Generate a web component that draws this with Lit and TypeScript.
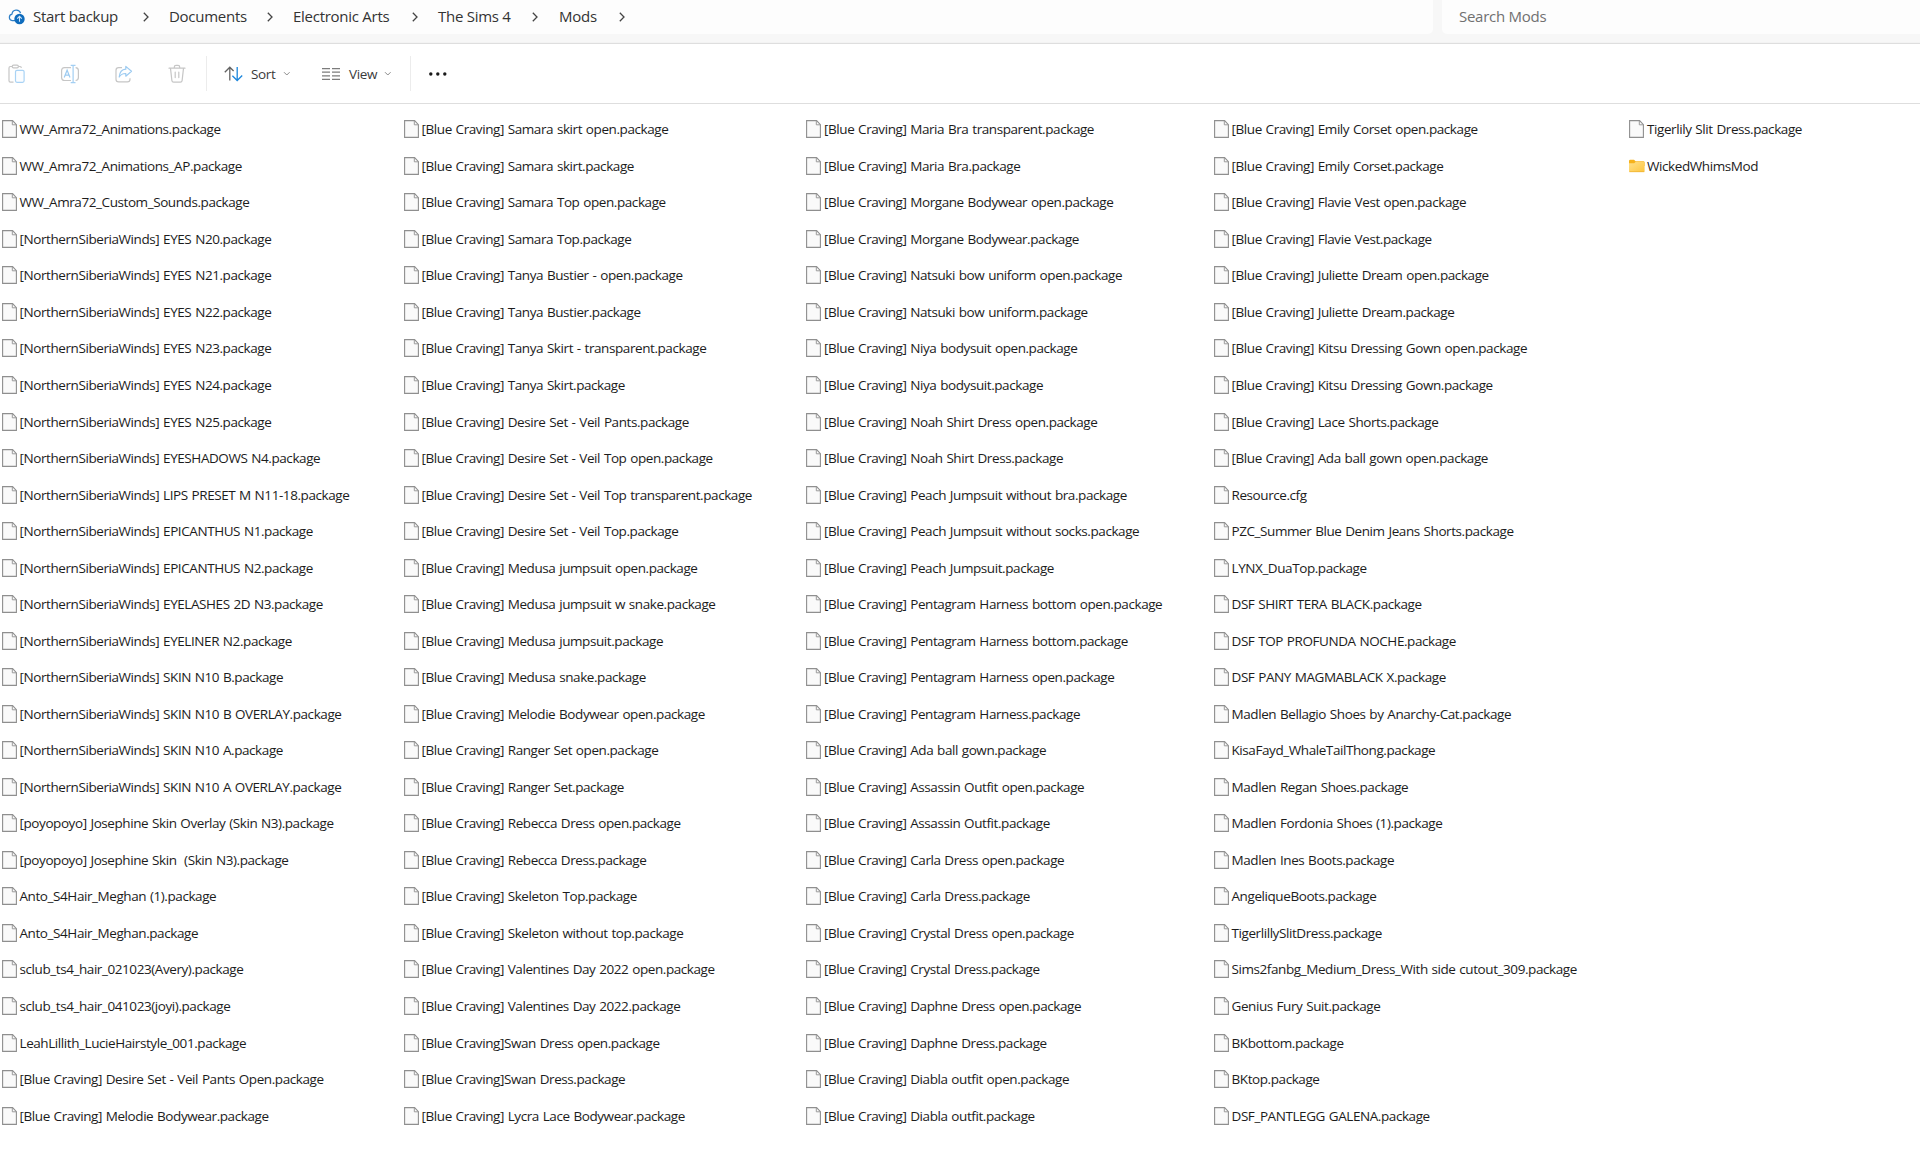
import { LitElement, html, svg, css } from "lit";
import { customElement, property } from "lit/decorators.js";

const bc = (names: string[]) => names.map((n) => `[Blue Craving] ${n}.package`);
const nsw = (names: string[]) => names.map((n) => `[NorthernSiberiaWinds] ${n}.package`);
const pkg = (names: string[]) => names.map((n) => `${n}.package`);

const COLUMNS: string[][] = [
  [
    ...pkg(["WW_Amra72_Animations", "WW_Amra72_Animations_AP", "WW_Amra72_Custom_Sounds"]),
    ...nsw([
      "EYES N20", "EYES N21", "EYES N22", "EYES N23", "EYES N24", "EYES N25",
      "EYESHADOWS N4", "LIPS PRESET M N11-18", "EPICANTHUS N1", "EPICANTHUS N2",
      "EYELASHES 2D N3", "EYELINER N2", "SKIN N10 B", "SKIN N10 B OVERLAY",
      "SKIN N10 A", "SKIN N10 A OVERLAY",
    ]),
    ...pkg([
      "[poyopoyo] Josephine Skin Overlay (Skin N3)", "[poyopoyo] Josephine Skin  (Skin N3)",
      "Anto_S4Hair_Meghan (1)", "Anto_S4Hair_Meghan", "sclub_ts4_hair_021023(Avery)",
      "sclub_ts4_hair_041023(joyi)", "LeahLillith_LucieHairstyle_001",
    ]),
    ...bc(["Desire Set - Veil Pants Open", "Melodie Bodywear"]),
  ],
  [
    ...bc([
      "Samara skirt open", "Samara skirt", "Samara Top open", "Samara Top",
      "Tanya Bustier - open", "Tanya Bustier", "Tanya Skirt - transparent", "Tanya Skirt",
      "Desire Set - Veil Pants", "Desire Set - Veil Top open", "Desire Set - Veil Top transparent",
      "Desire Set - Veil Top", "Medusa jumpsuit open", "Medusa jumpsuit w snake",
      "Medusa jumpsuit", "Medusa snake", "Melodie Bodywear open", "Ranger Set open",
      "Ranger Set", "Rebecca Dress open", "Rebecca Dress", "Skeleton Top",
      "Skeleton without top", "Valentines Day 2022 open", "Valentines Day 2022",
    ]),
    ...pkg(["[Blue Craving]Swan Dress open", "[Blue Craving]Swan Dress"]),
    ...bc(["Lycra Lace Bodywear"]),
  ],
  bc([
    "Maria Bra transparent", "Maria Bra", "Morgane Bodywear open", "Morgane Bodywear",
    "Natsuki bow uniform open", "Natsuki bow uniform", "Niya bodysuit open", "Niya bodysuit",
    "Noah Shirt Dress open", "Noah Shirt Dress", "Peach Jumpsuit without bra",
    "Peach Jumpsuit without socks", "Peach Jumpsuit", "Pentagram Harness bottom open",
    "Pentagram Harness bottom", "Pentagram Harness open", "Pentagram Harness",
    "Ada ball gown", "Assassin Outfit open", "Assassin Outfit", "Carla Dress open",
    "Carla Dress", "Crystal Dress open", "Crystal Dress", "Daphne Dress open",
    "Daphne Dress", "Diabla outfit open", "Diabla outfit",
  ]),
  [
    ...bc([
      "Emily Corset open", "Emily Corset", "Flavie Vest open", "Flavie Vest",
      "Juliette Dream open", "Juliette Dream", "Kitsu Dressing Gown open",
      "Kitsu Dressing Gown", "Lace Shorts", "Ada ball gown open",
    ]),
    "Resource.cfg",
    ...pkg([
      "PZC_Summer Blue Denim Jeans Shorts", "LYNX_DuaTop", "DSF SHIRT TERA BLACK",
      "DSF TOP PROFUNDA NOCHE", "DSF PANY MAGMABLACK X", "Madlen Bellagio Shoes by Anarchy-Cat",
      "KisaFayd_WhaleTailThong", "Madlen Regan Shoes", "Madlen Fordonia Shoes (1)",
      "Madlen Ines Boots", "AngeliqueBoots", "TigerlillySlitDress",
      "Sims2fanbg_Medium_Dress_With side cutout_309", "Genius Fury Suit", "BKbottom",
      "BKtop", "DSF_PANTLEGG GALENA",
    ]),
  ],
  ["Tigerlily Slit Dress.package", "WickedWhimsMod"],
];

const fileIcon = svg`<svg width="16" height="18" viewBox="0 0 16 18">
  <path d="M.6 .6H10.6L14.4 4.6V17.4H.6Z" fill="#fafafa" stroke="#8f8f8f" stroke-width="1.1"/>
  <path d="M10.3 .8V4.8H14.3" fill="none" stroke="#9a9a9a" stroke-width="1"/></svg>`;

const folderIcon = svg`<svg width="16" height="18" viewBox="0 0 16 18">
  <defs><linearGradient id="f" x1="0" y1="0" x2="1" y2="1">
    <stop offset="0" stop-color="#ffe08a"/><stop offset="1" stop-color="#fdc640"/></linearGradient></defs>
  <path d="M0 4Q0 2.7 1.3 2.7H5L6.6 4.2H14.4Q15.6 4.2 15.6 5.4V9H0Z" fill="#f6b21b"/>
  <path d="M0 6.2H5.2L6.8 4.8H14.6Q15.6 4.8 15.6 5.8V14Q15.6 15 14.6 15H1Q0 15 0 14Z" fill="url(#f)"/>
  <path d="M.3 14.7H15.3" stroke="#eeb02c" stroke-width=".7"/></svg>`;

const icons = {
  cloud: svg`<svg width="18" height="18" viewBox="0 0 18 18" fill="none">
    <path d="M7 12.6H4.2A3.3 3.3 0 0 1 4 6.1A4.4 4.4 0 0 1 12.6 5.2" stroke="#2f7fc6" stroke-width="1.2"/>
    <circle cx="11.5" cy="11" r="5.2" fill="#0f6cbd"/>
    <path d="M11.5 13.8V8.4M9.2 10.6L11.5 8.3L13.8 10.6" stroke="#d5e8f8" stroke-width="1.1"/></svg>`,
  paste: svg`<svg width="18" height="20" viewBox="0 0 18 20" fill="none" stroke-width="1.2">
    <path d="M5.5 18.2H2.4Q1 18.2 1 16.8V4Q1 2.5 2.4 2.5H4M10.5 2.5H12Q13.3 2.5 13.3 4" stroke="#c6c6c6"/>
    <rect x="4.2" y="1.1" width="6.2" height="2.8" rx="1.3" stroke="#c6c6c6"/>
    <rect x="7.5" y="6.3" width="8.6" height="12" rx="1.5" stroke="#a9d3f5" fill="#fbfdff"/></svg>`,
  rename: svg`<svg width="20" height="20" viewBox="0 0 20 20" fill="none" stroke-width="1.2">
    <path d="M11 16.5H4.5Q1.6 16.5 1.6 13.6V6.6Q1.6 3.6 4.5 3.6H11M15.6 3.6Q18.4 3.8 18.4 6.6V13.6Q18.4 16.3 15.6 16.5" stroke="#c6c6c6"/>
    <path d="M10.7 1.3H15.5M10.7 18.7H15.5M13.1 1.3V18.7" stroke="#a3cff3"/>
    <path d="M4.2 13.5L7.1 6.2L10 13.5M5.2 11.1H9" stroke="#9dcbf1"/></svg>`,
  share: svg`<svg width="18" height="20" viewBox="0 0 18 20" fill="none" stroke-width="1.2" stroke-linejoin="round">
    <path d="M7 3.6H3.6Q1 3.6 1 6.2V15.2Q1 17.8 3.6 17.8H12.4Q15 17.8 15 15.2V14.2" stroke="#c6c6c6"/>
    <path d="M10.8 2.4L16.5 7.3L10.8 12.2V9.5Q6.5 9.3 4.2 13Q4.8 5.7 10.8 5.2Z" stroke="#9dcbf1"/></svg>`,
  trash: svg`<svg width="18" height="20" viewBox="0 0 18 20" fill="none" stroke="#c6c6c6" stroke-width="1.2" stroke-linecap="round">
    <path d="M1 4.2H17M6.3 4V3Q6.3 1.4 8 1.4H10Q11.7 1.4 11.7 3V4M2.5 4.4L3.9 16.6Q4.1 18.2 5.6 18.2H12.4Q13.9 18.2 14.1 16.6L15.5 4.4M7.2 8V13.6M10.8 8V13.6"/></svg>`,
  sort: svg`<svg width="20" height="16" viewBox="0 0 20 16" fill="none" stroke-width="1.3">
    <path d="M5.8 14.5V1.4M.8 6.2L5.8 1.2L9.6 5" stroke="#636363"/>
    <path d="M13.2 1V14.2M8.4 9.7L13.2 14.5L18.2 9.5" stroke="#1c86dc"/></svg>`,
  view: svg`<svg width="18" height="14" viewBox="0 0 18 14" stroke="#7c7c7c" stroke-width="1.2">
    <path d="M0 1.6H8M10 1.6H18M0 5.2H8M10 5.2H18M0 8.8H8M10 8.8H18M0 12.4H8M10 12.4H18"/></svg>`,
  down: svg`<svg width="8" height="6" viewBox="0 0 8 6" fill="none" stroke="#8c8c8c" stroke-width="1"><path d="M1 1.2L3.8 4L6.6 1.2"/></svg>`,
  right: svg`<svg width="6" height="10" viewBox="0 0 6 10" fill="none" stroke="#444" stroke-width="1.3"><path d="M.8 .8L5 5L.8 9.2"/></svg>`,
  more: svg`<svg width="20" height="4" viewBox="0 0 20 4" fill="#1a1a1a"><circle cx="2.8" cy="2" r="1.7"/><circle cx="9.8" cy="2" r="1.7"/><circle cx="16.8" cy="2" r="1.7"/></svg>`,
};

@customElement("address-bar")
class AddressBar extends LitElement {
  static styles = css`
    :host { display: flex; height: 43px; box-sizing: border-box; gap: 9px; background: #f7f7f7; color: #333; font-size: 15px; letter-spacing: -0.27px; border-bottom: 1px solid #f3f3f3; }
    .crumbs { display: grid; grid-template-columns: 25px 110px 26px 98px 26px 119px 26px 94px 27px 60px 20px; align-items: center; width: 1433px; height: 34px; padding-left: 8px; box-sizing: border-box; background: #fdfdfd; border-radius: 0 0 5px 0; white-space: nowrap; }
    .search { flex: 1; height: 34px; box-sizing: border-box; padding-left: 17px; background: #fdfdfd; border-radius: 0 0 0 5px; color: #707070; line-height: 33px; }
    svg { display: block; }
    .crumb { line-height: 33px; height: 34px; }
  `;
  render() {
    return html`<nav class="crumbs">
        ${icons.cloud}<span class="crumb">Start backup</span>${icons.right}
        <span class="crumb">Documents</span>${icons.right}
        <span class="crumb">Electronic Arts</span>${icons.right}
        <span class="crumb">The Sims 4</span>${icons.right}
        <span class="crumb">Mods</span>${icons.right}
      </nav>
      <div class="search">Search Mods</div>`;
  }
}

@customElement("command-bar")
class CommandBar extends LitElement {
  static styles = css`
    :host { display: flex; align-items: center; height: 61px; box-sizing: border-box; border-top: 1px solid #dedede; border-bottom: 1px solid #dedede; background: #fff; color: #3a3a3a; font-size: 13.5px; letter-spacing: -0.35px; }
    svg { display: block; flex: none; }
    .actions { display: grid; grid-template-columns: 52px 55px 53px 38px; align-items: center; padding-left: 8px; }
    .rule { width: 1px; height: 35px; background: #ececec; }
    .menu { display: flex; align-items: center; }
    .sort { padding-left: 17px; gap: 7px; width: 115px; box-sizing: border-box; }
    .view { gap: 9px; width: 88px; }
    .label { width: 25px; white-space: nowrap; }
    .label.wide { width: 26px; }
    .more { padding-left: 17px; }
  `;
  render() {
    return html`<div class="actions">${icons.paste}${icons.rename}${icons.share}${icons.trash}</div>
      <div class="rule"></div>
      <div class="menu sort">${icons.sort}<span class="label">Sort</span>${icons.down}</div>
      <div class="menu view">${icons.view}<span class="label wide">View</span>${icons.down}</div>
      <div class="rule"></div>
      <div class="more">${icons.more}</div>`;
  }
}

@customElement("file-column")
class FileColumn extends LitElement {
  @property({ attribute: false }) names: string[] = [];
  static styles = css`
    :host { display: block; }
    .row { display: flex; align-items: center; height: 36.54px; gap: 2px; white-space: pre; }
    svg { display: block; flex: none; }
  `;
  render() {
    return this.names.map(
      (n) => html`<div class="row">${/\.\w+$/.test(n) ? fileIcon : folderIcon}<span>${n}</span></div>`
    );
  }
}

@customElement("app-root")
class AppRoot extends LitElement {
  static styles = css`
    :host { display: block; width: 1920px; height: 1160px; overflow: hidden; background: #fff; font-family: "Open Sans", "Noto Sans", sans-serif; }
    .files { display: grid; grid-template-columns: 402px 402.5px 407.5px 415.5px 1fr; padding: 7px 0 0 1.5px; color: #1c1c1c; font-size: 13.5px; letter-spacing: -0.42px; word-spacing: 0.7px; }
  `;
  render() {
    return html`<address-bar></address-bar><command-bar></command-bar>
      <main class="files">${COLUMNS.map((c) => html`<file-column .names=${c}></file-column>`)}</main>`;
  }
}
